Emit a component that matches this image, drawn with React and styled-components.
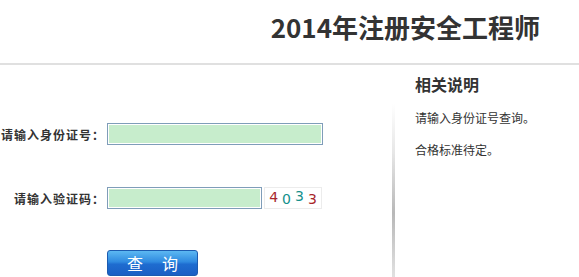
import React from "react";
import styled, { createGlobalStyle } from "styled-components";

const Global = createGlobalStyle`
  html, body { margin: 0; padding: 0; background: #fff; }
  body { font-family: "Noto Sans CJK SC", "Noto Sans", sans-serif; color: #333; }
`;

const Page = styled.div`
  width: 579px;
  height: 277px;
  overflow: hidden;
  display: flex;
  flex-direction: column;
`;

const Header = styled.header`
  flex-shrink: 0;
  height: 65px;
  box-sizing: border-box;
  border-bottom: 2px solid #e0e0e0;
  display: flex;
  justify-content: flex-end;
  padding: 9px 39px 0 0;
`;

const Title = styled.h1`
  margin: 0;
  font-size: 26px;
  line-height: 36px;
  font-weight: 700;
  color: #333;
`;

const Body = styled.div`
  display: flex;
  flex: 1;
  min-height: 0;
`;

const Main = styled.div`
  width: 392px;
  flex-shrink: 0;
  padding-top: 58px;
  box-sizing: border-box;
`;

const Form = styled.div`
  display: grid;
  grid-template-columns: 104px auto;
  column-gap: 3px;
  row-gap: 42px;
  align-items: center;
`;

const Label = styled.label`
  text-align: right;
  font-size: 12px;
  font-weight: 700;
  letter-spacing: 1px;
  margin-right: -1px;
  color: #333;
  white-space: nowrap;
`;

const Field = styled.div`
  display: flex;
  align-items: center;
  gap: 2px;
`;

const Input = styled.input`
  box-sizing: border-box;
  width: ${(p) => p.$w}px;
  height: 22px;
  margin: 0;
  padding: 0 3px;
  border: 1px solid #7f9db9;
  box-shadow: inset 0 0 0 1px #fff;
  background: #c7edcc;
  outline: none;
`;

const Captcha = styled.div`
  box-sizing: border-box;
  width: 58px;
  height: 22px;
  border: 1px solid #ececec;
  display: flex;
  align-items: center;
  justify-content: center;
  gap: 4px;
  font-family: "DejaVu Sans", sans-serif;
  font-size: 14px;
  background: #fff;
`;

const Digit = styled.span`
  color: ${(p) => p.$c};
  transform: translateY(${(p) => p.$dy}px);
  line-height: 1;
`;

const ButtonRow = styled.div`
  grid-column: 2;
  margin-top: -1px;
`;

const Button = styled.button`
  box-sizing: border-box;
  width: 91px;
  height: 26px;
  margin: 0;
  padding: 0 0 0 19px;
  border: 1px solid #1c5bb0;
  border-radius: 3px;
  background: linear-gradient(#5cb8f2 0%, #2f8ae0 45%, #1e6cd0 55%, #1a5fc4 100%);
  color: #fff;
  font-family: "Noto Sans CJK SC", sans-serif;
  font-size: 16px;
  letter-spacing: 19px;
  line-height: 24px;
  cursor: pointer;
`;

const Sidebar = styled.aside`
  flex: 1;
  display: flex;
`;

const Divider = styled.div`
  width: 3px;
  flex-shrink: 0;
  margin-top: 38px;
  height: 200px;
  background: linear-gradient(#fff 0%, #e6e6e6 25%, #b8b8b8 55%, #d8d8d8 80%, #f2f2f2 100%);
`;

const Notes = styled.div`
  padding: 8px 0 0 20px;
`;

const NotesTitle = styled.h2`
  margin: 0 0 14px;
  font-size: 16px;
  line-height: 22px;
  font-weight: 700;
  color: #333;
`;

const Note = styled.p`
  margin: 0 0 14px;
  font-size: 12px;
  line-height: 18px;
  color: #333;
`;

export default function App() {
  return (
    <>
      <Global />
      <Page>
        <Header>
          <Title>2014年注册安全工程师</Title>
        </Header>
        <Body>
          <Main>
            <Form>
              <Label>请输入身份证号：</Label>
              <Field>
                <Input $w={216} />
              </Field>
              <Label>请输入验证码：</Label>
              <Field>
                <Input $w={155} />
                <Captcha>
                  <Digit $c="#a8262c" $dy={-1}>4</Digit>
                  <Digit $c="#14908c" $dy={1}>0</Digit>
                  <Digit $c="#14908c" $dy={-2}>3</Digit>
                  <Digit $c="#a8262c" $dy={1}>3</Digit>
                </Captcha>
              </Field>
              <ButtonRow>
                <Button>查询</Button>
              </ButtonRow>
            </Form>
          </Main>
          <Sidebar>
            <Divider />
            <Notes>
              <NotesTitle>相关说明</NotesTitle>
              <Note>请输入身份证号查询。</Note>
              <Note>合格标准待定。</Note>
            </Notes>
          </Sidebar>
        </Body>
      </Page>
    </>
  );
}
